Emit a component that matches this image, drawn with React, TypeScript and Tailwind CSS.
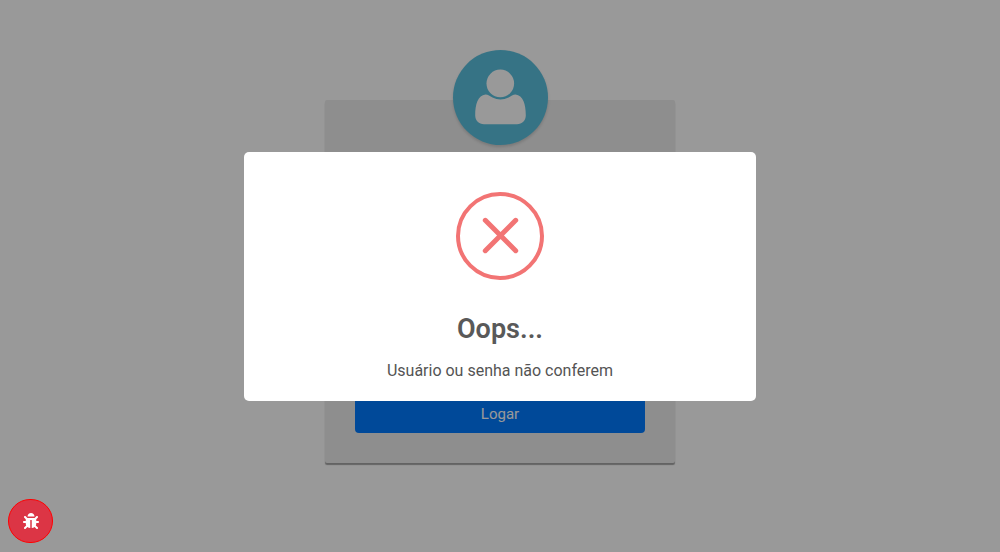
import React from "react";

function UserIcon() {
  return (
    <svg viewBox="0 0 95 95" className="size-full" fill="#fff" aria-hidden="true">
      <circle cx="47.3" cy="33.4" r="13.8" />
      <path d="M32.5 44.6 C35 44.6 37 46.2 39.5 47.6 C44.5 50.2 50.5 50.2 55.5 47.6 C58 46.2 60 44.6 62.5 44.6 C70 45.5 72.8 54 72.8 65.5 C72.8 70.5 69 74.2 64 74.2 H31 C26 74.2 22.2 70.5 22.2 65.5 C22.2 54 25 45.5 32.5 44.6 Z" />
    </svg>
  );
}

function ErrorIcon() {
  return (
    <svg viewBox="0 0 88 88" className="size-22" fill="none" stroke="#f27474" aria-hidden="true">
      <circle cx="44" cy="44" r="42" strokeWidth="4" />
      <path d="M29.3 28.3 L59.7 58.7 M59.7 28.3 L29.3 58.7" strokeWidth="5" strokeLinecap="round" />
    </svg>
  );
}

function BugIcon() {
  return (
    <svg viewBox="0 0 512 512" className="size-4" fill="currentColor" aria-hidden="true">
      <path d="M511.988 288.9c-.478 17.43-15.217 31.1-32.653 31.1H424v16c0 21.864-4.882 42.584-13.6 61.145l60.228 60.228c12.496 12.497 12.496 32.758 0 45.255-12.498 12.497-32.759 12.496-45.256 0l-54.736-54.736C345.886 467.965 314.351 480 280 480V236c0-6.627-5.373-12-12-12h-24c-6.627 0-12 5.373-12 12v244c-34.351 0-65.886-12.035-90.636-32.108l-54.736 54.736c-12.498 12.497-32.759 12.496-45.256 0-12.496-12.497-12.496-32.758 0-45.255l60.228-60.228C92.882 378.584 88 357.864 88 336v-16H32.666C15.23 320 .491 306.33.013 288.9-.484 270.816 14.028 256 32 256h56v-58.745l-46.628-46.628c-12.496-12.497-12.496-32.758 0-45.255 12.498-12.497 32.758-12.497 45.256 0L141.255 160h229.489l54.627-54.627c12.498-12.497 32.758-12.497 45.256 0 12.496 12.497 12.496 32.758 0 45.255L424 197.255V256h56c17.972 0 32.484 14.816 31.988 32.9zM257 0c-61.856 0-112 50.144-112 112h224C369 50.144 318.856 0 257 0z" />
    </svg>
  );
}

export default function App() {
  return (
    <div className="min-h-screen bg-white font-['Roboto',sans-serif]">
      <main className="flex justify-center px-4 pt-[100px]">
        <form
          className="w-full max-w-[350px] rounded-xs bg-[#ededed] px-[30px] pb-[30px] shadow-[0_2px_1px_rgba(0,0,0,0.35)]"
          onSubmit={(e) => e.preventDefault()}
        >
          <div className="mx-auto -mt-[50px] size-[95px] rounded-full bg-[#5bc0de] shadow-[0_2px_3px_rgba(0,0,0,0.15)]">
            <UserIcon />
          </div>
          <div className="mt-[30px] flex flex-col gap-5">
            <input aria-label="Usuário" className="h-[38px] w-full rounded-sm border border-[#ced4da] bg-white px-3" />
            <input aria-label="Senha" type="password" className="h-[38px] w-full rounded-sm border border-[#ced4da] bg-white px-3" />
          </div>
          <button type="submit" className="mt-[124px] h-[38px] w-full rounded-sm bg-[#007bff] pt-px text-[15px] text-white">
            Logar
          </button>
        </form>
      </main>

      <div className="fixed inset-0 flex items-center justify-center bg-black/40 p-4">
        <div role="dialog" aria-modal="true" aria-labelledby="title" className="flex w-full max-w-lg flex-col items-center rounded-[5px] bg-white px-5 pt-10 pb-[18px]">
          <ErrorIcon />
          <h2 id="title" className="mt-7 text-[27px] leading-[42px] font-semibold text-[#595959]">Oops...</h2>
          <p className="mt-2 text-base leading-[25px] text-[#545454]">Usuário ou senha não conferem</p>
        </div>
      </div>

      <button
        type="button"
        aria-label="Reportar erro"
        className="fixed bottom-[9px] left-2 flex h-[44px] w-[45px] items-center justify-center rounded-full border border-[#ff0000] bg-[#dc3545] text-white"
      >
        <BugIcon />
      </button>
    </div>
  );
}
